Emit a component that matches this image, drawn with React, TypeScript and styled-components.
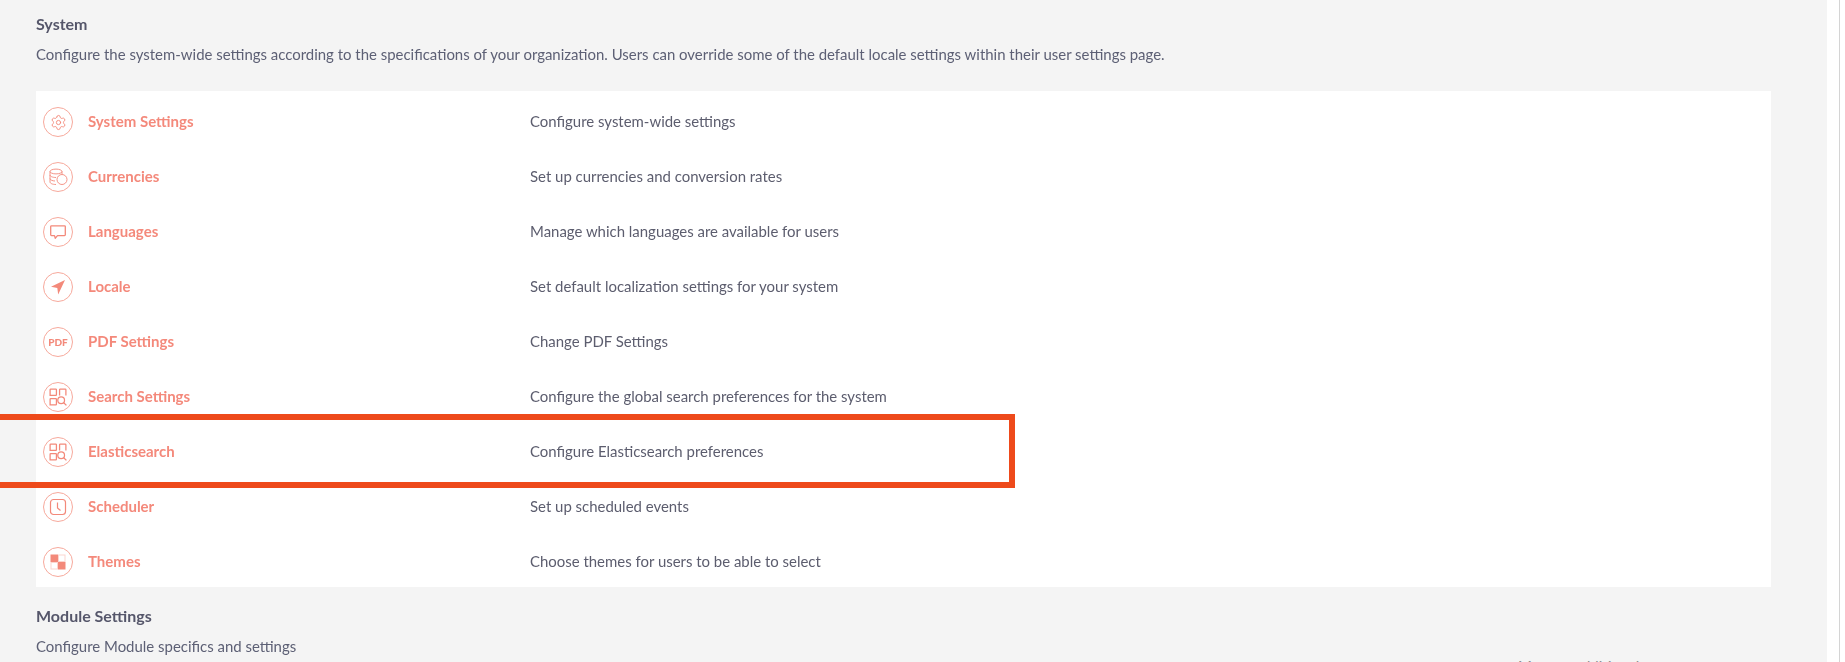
import styled, { createGlobalStyle } from 'styled-components';
import { Settings } from 'lucide-react';

const GlobalStyle = createGlobalStyle`
  html, body {
    margin: 0;
    padding: 0;
    background: #fff;
  }

  body {
    font-family: Lato, "Open Sans", sans-serif;
    height: 662px;
    overflow: hidden;
  }
`;

const Page = styled.div`
  position: relative;
  width: 1845px;
  height: 662px;
  overflow: hidden;
  background: #fff;
`;

const Content = styled.main`
  width: 1827px;
  height: 662px;
  box-sizing: border-box;
  padding: 14px 56px 0 36px;
  background: #f4f4f4;
  filter: blur(0.35px);
`;

const Divider = styled.div`
  position: absolute;
  top: 0;
  left: 1839px;
  width: 1px;
  height: 662px;
  background: #d4d4d4;
`;

const SectionTitle = styled.h2`
  margin: 0;
  font-size: 16px;
  font-weight: 700;
  line-height: 20px;
  color: #55566a;
`;

const SectionText = styled.p`
  margin: 10px 0 0;
  font-size: 14.94px;
  line-height: 20px;
  color: #5d6075;
`;

const Panel = styled.div`
  margin: 27px 0 19px;
  padding-top: 6px;
  background: #fff;
  display: flex;
  flex-direction: column;
  gap: 5px;
`;

const Row = styled.div`
  display: grid;
  grid-template-columns: 494px 1fr;
  align-items: center;
  height: 50px;
`;

const NameCell = styled.div`
  display: flex;
  align-items: center;
  gap: 15px;
  padding-left: 7px;
`;

const IconRing = styled.span`
  flex: none;
  width: 30px;
  height: 30px;
  box-sizing: border-box;
  border: 1.5px solid #f7a99c;
  border-radius: 50%;
  display: flex;
  align-items: center;
  justify-content: center;
  color: #f3897a;
`;

const PdfLabel = styled.span`
  font-size: 10px;
  font-weight: 900;
  color: #f3897a;
`;

const Name = styled.a`
  padding-bottom: 2px;
  font-size: 15px;
  font-weight: 700;
  color: #f4897b;
`;

const Description = styled.span`
  padding-bottom: 2px;
  font-size: 14.94px;
  color: #5c5d6e;
`;

const Highlight = styled.div`
  position: absolute;
  left: -10px;
  top: 414px;
  width: 1025px;
  height: 74px;
  box-sizing: border-box;
  border: 6px solid #ee4a1b;
  filter: blur(0.35px);
  pointer-events: none;
`;

const ClippedNote = styled.span`
  position: absolute;
  left: 1518px;
  top: 656px;
  font-size: 15px;
  line-height: 20px;
  color: #8d8d8d;
`;

const CoinsIcon = () => (
  <svg width="22" height="22" viewBox="0 0 22 22" fill="none" stroke="currentColor" strokeWidth="0.9">
    <ellipse cx="9" cy="5.500" rx="6" ry="2.400" />
    <path d="M3 5.500v10.500c0 1.400 2.600 2.500 6 2.500M3 9c0 1.400 2.600 2.500 6 2.500M3 12.500c0 1.400 2.600 2.500 5 2.500M15 5.500v3" />
    <circle cx="15" cy="13.500" r="5" fill="#fff" />
  </svg>
);

const ChatIcon = () => (
  <svg width="18" height="18" viewBox="0 0 18 18" fill="none" stroke="currentColor" strokeWidth="1.3">
    <path d="M2.500 2.800h13a.8.8 0 0 1 .8.8v8.200a.8.8 0 0 1-.8.8H8.500l-2.300 2.600-.7-2.600h-3a.8.8 0 0 1-.8-.8V3.600a.8.8 0 0 1 .8-.8z" strokeLinejoin="round" />
  </svg>
);

const NavigateIcon = () => (
  <svg width="18" height="18" viewBox="0 0 18 18" fill="currentColor">
    <path d="M16 2L2 8.800l6.300 1.100.9 6.600z" />
  </svg>
);

const SearchGridIcon = () => (
  <svg width="20" height="20" viewBox="0 0 19 19" fill="none" stroke="currentColor" strokeWidth="1.2">
    <path d="M2 8V2.600A.6.600 0 0 1 2.600 2h4.800a.6.600 0 0 1 .6.600v4.800a.6.600 0 0 1-.6.600z" />
    <path d="M11 8V2.600a.6.600 0 0 1 .6-.6h4.800a.6.600 0 0 1 .6.600V8" />
    <path d="M2 17v-5.400a.6.600 0 0 1 .6-.6h4.800a.6.600 0 0 1 .6.600v4.800a.6.600 0 0 1-.6.600z" />
    <circle cx="12.500" cy="12.500" r="3.200" />
    <path d="M14.900 14.900l2.600 2.600" />
  </svg>
);

const ClockIcon = () => (
  <svg width="18" height="18" viewBox="0 0 18 18" fill="none" stroke="currentColor" strokeWidth="1.2">
    <rect x="1.500" y="1.500" width="15" height="15" rx="3" />
    <path d="M8.500 4.500V10l3 2.500" />
  </svg>
);

const ThemeIcon = () => (
  <svg width="16" height="16" viewBox="0 0 16 16" fill="currentColor">
    <rect x="0.500" y="0.500" width="7.500" height="7.500" />
    <rect x="8" y="8" width="7.500" height="7.500" />
    <rect x="8.500" y="1" width="6.500" height="6.500" fill="none" stroke="#fbd5cf" />
    <rect x="1" y="8.500" width="6.500" height="6.500" fill="none" stroke="#fbd5cf" />
  </svg>
);

const rows = [
  { name: 'System Settings', description: 'Configure system-wide settings', icon: <Settings size={17} strokeWidth={1.3} /> },
  { name: 'Currencies', description: 'Set up currencies and conversion rates', icon: <CoinsIcon /> },
  { name: 'Languages', description: 'Manage which languages are available for users', icon: <ChatIcon /> },
  { name: 'Locale', description: 'Set default localization settings for your system', icon: <NavigateIcon /> },
  { name: 'PDF Settings', description: 'Change PDF Settings', icon: <PdfLabel>PDF</PdfLabel> },
  { name: 'Search Settings', description: 'Configure the global search preferences for the system', icon: <SearchGridIcon /> },
  { name: 'Elasticsearch', description: 'Configure Elasticsearch preferences', icon: <SearchGridIcon /> },
  { name: 'Scheduler', description: 'Set up scheduled events', icon: <ClockIcon /> },
  { name: 'Themes', description: 'Choose themes for users to be able to select', icon: <ThemeIcon /> },
];

export default function App() {
  return (
    <Page>
      <GlobalStyle />
      <Content>
        <SectionTitle>System</SectionTitle>
        <SectionText>
          Configure the system-wide settings according to the specifications of your organization. Users can override
          some of the default locale settings within their user settings page.
        </SectionText>
        <Panel>
          {rows.map(row => (
            <Row key={row.name}>
              <NameCell>
                <IconRing>{row.icon}</IconRing>
                <Name>{row.name}</Name>
              </NameCell>
              <Description>{row.description}</Description>
            </Row>
          ))}
        </Panel>
        <SectionTitle>Module Settings</SectionTitle>
        <SectionText>Configure Module specifics and settings</SectionText>
      </Content>
      <Divider />
      <Highlight />
      <ClippedNote>Manage additional</ClippedNote>
    </Page>
  );
}
